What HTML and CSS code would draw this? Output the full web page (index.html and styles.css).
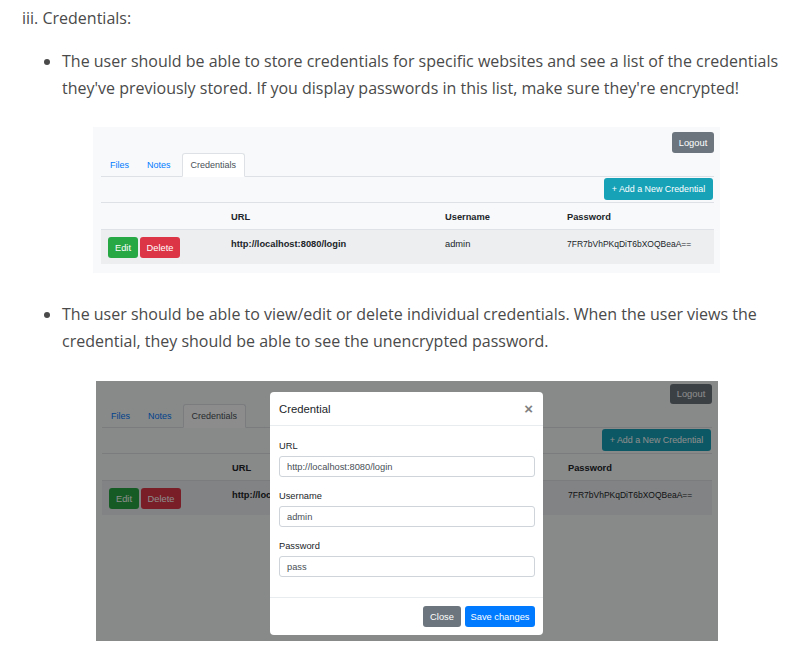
FILE: index.html
```html
<!DOCTYPE html>
<html>
<head>
<meta charset="utf-8">
<link rel="stylesheet" href="styles.css">
</head>
<body>
<div class="doc">
  <p class="heading">iii. Credentials:</p>
  <ul class="list">
    <li>
      <span class="text">The user should be able to store credentials for specific websites and see a list of the credentials they've previously stored. If you display passwords in this list, make sure they're encrypted!</span>
      <div class="shot shot-one">
        <div class="app">
          <div class="topbar"><span class="btn btn-secondary btn-logout">Logout</span></div>
          <div class="tabs">
            <span class="tab">Files</span>
            <span class="tab">Notes</span>
            <span class="tab tab-active">Credentials</span>
          </div>
          <div class="actions"><span class="btn btn-info btn-add">+ Add a New Credential</span></div>
          <div class="table">
            <div class="row row-head">
              <div class="cell"></div>
              <div class="cell">URL</div>
              <div class="cell">Username</div>
              <div class="cell">Password</div>
            </div>
            <div class="row row-data">
              <div class="cell cell-btns"><span class="btn btn-success btn-edit">Edit</span><span class="btn btn-danger btn-del">Delete</span></div>
              <div class="cell cell-url">http://localhost:8080/login</div>
              <div class="cell">admin</div>
              <div class="cell cell-pass">7FR7bVhPKqDiT6bXOQBeaA==</div>
            </div>
          </div>
        </div>
      </div>
    </li>
    <li class="second">
      <span class="text">The user should be able to view/edit or delete individual credentials. When the user views the credential, they should be able to see the unencrypted password.</span>
      <div class="shot shot-two">
        <div class="app app-tight">
          <div class="topbar"><span class="btn btn-secondary btn-logout">Logout</span></div>
          <div class="tabs">
            <span class="tab">Files</span>
            <span class="tab">Notes</span>
            <span class="tab tab-active">Credentials</span>
          </div>
          <div class="actions"><span class="btn btn-info btn-add">+ Add a New Credential</span></div>
          <div class="table">
            <div class="row row-head">
              <div class="cell"></div>
              <div class="cell">URL</div>
              <div class="cell">Username</div>
              <div class="cell">Password</div>
            </div>
            <div class="row row-data">
              <div class="cell cell-btns"><span class="btn btn-success btn-edit">Edit</span><span class="btn btn-danger btn-del">Delete</span></div>
              <div class="cell cell-url">http://localhost:8080/login</div>
              <div class="cell">admin</div>
              <div class="cell cell-pass">7FR7bVhPKqDiT6bXOQBeaA==</div>
            </div>
          </div>
        </div>
        <div class="backdrop"></div>
        <div class="modal">
          <div class="modal-header">
            <span class="modal-title">Credential</span>
            <span class="modal-close">&times;</span>
          </div>
          <div class="modal-body">
            <div class="group">
              <div class="label">URL</div>
              <div class="input">http://localhost:8080/login</div>
            </div>
            <div class="group">
              <div class="label">Username</div>
              <div class="input">admin</div>
            </div>
            <div class="group">
              <div class="label">Password</div>
              <div class="input">pass</div>
            </div>
          </div>
          <div class="modal-footer">
            <span class="btn btn-secondary btn-close">Close</span>
            <span class="btn btn-primary btn-save">Save changes</span>
          </div>
        </div>
      </div>
    </li>
  </ul>
</div>
</body>
</html>
```
FILE: styles.css
```css
* { box-sizing: border-box; }
html, body { margin: 0; padding: 0; background: #fff; }
.doc {
  padding-left: 22px;
  font-family: "Open Sans", "Noto Sans", sans-serif;
  font-size: 16px;
  line-height: 27px;
  color: #4a4a4a;
}
.heading { margin: 5px 0 0 0; }
.list { margin: 16px 0 0 0; padding-left: 40px; width: 778px; }
.list li { margin: 0; }
.list li.second { margin-top: 28px; }
.text { display: block; }

.shot {
  position: relative;
  background: #f8f9fa;
  font-family: "Liberation Sans", Arial, Helvetica, sans-serif;
  font-size: 9.3px;
  line-height: 12px;
  color: #212529;
  overflow: hidden;
}
.shot-one { margin: 25px 0 0 31px; width: 627px; height: 146px; }
.shot-two { margin: 26px 0 0 34px; width: 622px; height: 260px; }

.app { padding: 5px 6px 0 8px; }
.app-tight { padding: 3px 6px 0 6px; }

.topbar { display: flex; justify-content: flex-end; }

.btn {
  display: inline-flex;
  align-items: center;
  justify-content: center;
  height: 21px;
  border-radius: 3px;
  color: #fff;
  white-space: nowrap;
}
.btn-secondary { background: #6c757d; }
.btn-info { background: #17a2b8; }
.btn-success { background: #28a745; }
.btn-danger { background: #dc3545; }
.btn-primary { background: #007bff; }

.btn-logout { width: 42px; }
.app-tight .btn-logout { height: 20px; }

.tabs {
  display: flex;
  height: 24px;
  border-bottom: 1px solid #dee2e6;
  padding-left: 0;
}
.tab {
  display: flex;
  align-items: center;
  padding: 0 8px;
  font-size: 9px;
  color: #007bff;
  border: 1px solid transparent;
  border-radius: 3px 3px 0 0;
  margin-bottom: -1px;
}
.tab-active {
  margin-left: 2px;
  color: #495057;
  background: #fff;
  border-color: #dee2e6 #dee2e6 #fff;
}

.actions { display: flex; justify-content: flex-end; padding-top: 1px; padding-right: 1px; }
.btn-add { width: 109px; height: 22px; font-size: 8.9px; }

.table { margin-top: 2px; }
.row {
  display: grid;
  grid-template-columns: 122px 214px 122px 1fr;
  border-top: 1px solid #dee2e6;
}
.row-head { height: 27px; font-weight: bold; }
.row-data { height: 35px; background: #eceef0; border-top: 1px solid #dfe2e6; }
.cell { padding: 8px 8px 0; white-space: nowrap; }
.cell-url { font-weight: bold; }
.cell-pass { font-size: 8.5px; }
.cell-btns { padding: 7px 0 0 7px; display: flex; gap: 2px; }
.btn-edit { width: 30px; }
.btn-del { width: 40px; }

.backdrop {
  position: absolute;
  inset: 0;
  background: rgba(0, 0, 0, 0.45);
}

.modal {
  position: absolute;
  left: 174px;
  top: 11px;
  width: 273px;
  height: 243px;
  background: #fff;
  border-radius: 4px;
  display: flex;
  flex-direction: column;
}
.modal-header {
  height: 34px;
  padding: 0 9px;
  display: flex;
  align-items: center;
  justify-content: space-between;
  border-bottom: 1px solid #e9ecef;
}
.modal-title { font-size: 11.3px; font-weight: 500; color: #212529; }
.modal-close { font-size: 15px; font-weight: bold; color: #000; opacity: 0.5; padding-right: 1px; }
.modal-body { padding: 14px 9px 0; height: 171px; }
.group { margin-bottom: 13px; }
.label { margin-bottom: 4px; }
.input {
  height: 21px;
  border: 1px solid #ced4da;
  border-radius: 3px;
  padding: 0 7px;
  display: flex;
  align-items: center;
  color: #495057;
  margin-right: -1px;
}
.modal-footer {
  border-top: 1px solid #e9ecef;
  padding: 8px 8px 8px;
  display: flex;
  justify-content: flex-end;
  gap: 4px;
}
.btn-close { width: 38px; }
.btn-save { width: 70px; }
```
